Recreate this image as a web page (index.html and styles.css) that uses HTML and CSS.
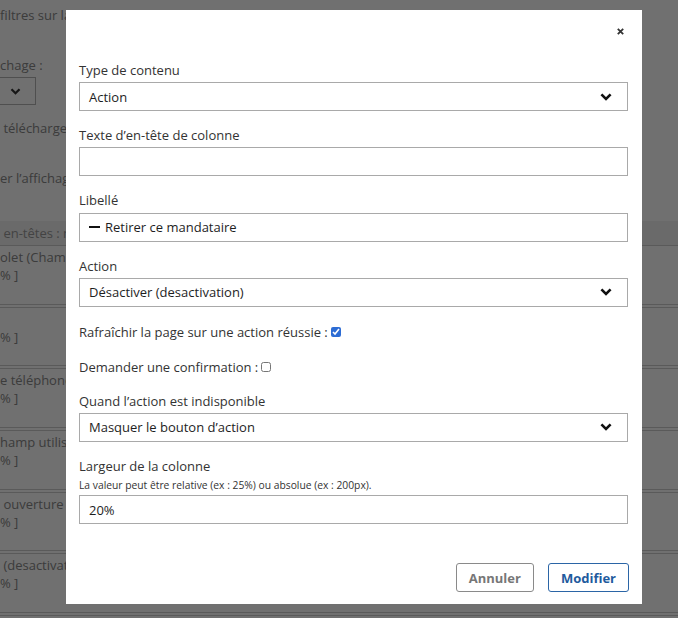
FILE: index.html
```html
<!DOCTYPE html>
<html lang="fr">
<head>
<meta charset="utf-8">
<title>Modifier la colonne</title>
<link rel="stylesheet" href="styles.css">
</head>
<body>
<div class="page">
  <p class="bg-text t1">filtres sur la</p>
  <p class="bg-text t2">chage :</p>
  <div class="bg-select">
    <svg width="11" height="7" viewBox="0 0 12 8"><path d="M1.4 1.4 6 6 10.6 1.4" fill="none" stroke="#333" stroke-width="2.6"/></svg>
  </div>
  <p class="bg-text t3">&nbsp;téléchargem</p>
  <p class="bg-text t4">er l’affichage</p>
  <div class="bg-table">
    <div class="bg-head">&nbsp;en-têtes : n</div>
    <div class="bg-row"><p>olet (Champ</p><p>% ]</p></div>
    <div class="bg-row"><p></p><p>% ]</p></div>
    <div class="bg-row"><p>e téléphone</p><p>% ]</p></div>
    <div class="bg-row"><p>hamp utilisa</p><p>% ]</p></div>
    <div class="bg-row"><p>&nbsp;ouverture d</p><p>% ]</p></div>
    <div class="bg-row"><p>&nbsp;(desactivatio</p><p>% ]</p></div>
  </div>
</div>
<div class="overlay"></div>
<div class="modal" role="dialog">
  <div class="modal-head">
    <button class="close" aria-label="Fermer">
      <svg width="7" height="7" viewBox="0 0 7 7"><path d="M0.8 0.8 6.2 6.2M6.2 0.8 0.8 6.2" stroke="#333" stroke-width="1.8" fill="none"/></svg>
    </button>
  </div>
  <div class="field">
    <label class="lbl">Type de contenu</label>
    <div class="control"><span class="val">Action</span>
      <svg class="chev" width="12" height="8" viewBox="0 0 12 8"><path d="M1.4 1.4 6 6 10.6 1.4" fill="none" stroke="#111" stroke-width="2.6"/></svg>
    </div>
  </div>
  <div class="field">
    <label class="lbl">Texte d’en-tête de colonne</label>
    <div class="control"></div>
  </div>
  <div class="field">
    <label class="lbl">Libellé</label>
    <div class="control"><span class="minus"></span><span class="val">Retirer ce mandataire</span></div>
  </div>
  <div class="field">
    <label class="lbl">Action</label>
    <div class="control"><span class="val">Désactiver (desactivation)</span>
      <svg class="chev" width="12" height="8" viewBox="0 0 12 8"><path d="M1.4 1.4 6 6 10.6 1.4" fill="none" stroke="#111" stroke-width="2.6"/></svg>
    </div>
  </div>
  <div class="check">Rafraîchir la page sur une action réussie :<input type="checkbox" checked></div>
  <div class="check">Demander une confirmation :<input type="checkbox"></div>
  <div class="field">
    <label class="lbl">Quand l’action est indisponible</label>
    <div class="control"><span class="val">Masquer le bouton d’action</span>
      <svg class="chev" width="12" height="8" viewBox="0 0 12 8"><path d="M1.4 1.4 6 6 10.6 1.4" fill="none" stroke="#111" stroke-width="2.6"/></svg>
    </div>
  </div>
  <div class="field last">
    <label class="lbl">Largeur de la colonne</label>
    <div class="hint">La valeur peut être relative (ex : 25%) ou absolue (ex : 200px).</div>
    <div class="control"><span class="val">20%</span></div>
  </div>
  <div class="footer">
    <button class="btn btn-cancel">Annuler</button>
    <button class="btn btn-primary">Modifier</button>
  </div>
</div>
</body>
</html>
```
FILE: styles.css
```css
* { box-sizing: border-box; }
html, body { margin: 0; padding: 0; }
body {
  font-family: "Open Sans", sans-serif;
  font-size: 13px;
  color: #333;
  background: #fff;
  width: 678px;
  height: 618px;
  overflow: hidden;
  position: relative;
}
.page { padding-top: 1px; }
.bg-text {
  margin: 0;
  line-height: 18px;
  color: #888;
  white-space: nowrap;
}
.t1 { margin-top: 5px; }
.t2 { margin-top: 32px; }
.bg-select {
  margin-top: 3px;
  margin-left: -20px;
  width: 56px;
  height: 28px;
  border: 1px solid #b5b5b5;
  display: flex;
  align-items: center;
  justify-content: flex-end;
  padding-right: 14px;
}
.t3 { margin-top: 14px; }
.t4 { margin-top: 32px; }
.bg-table { margin-top: 34px; }
.bg-head {
  height: 25px;
  line-height: 24px;
  background: #f1f1f1;
  border-bottom: 1px solid #ccc;
  color: #999;
  white-space: nowrap;
}
.bg-row {
  padding: 2px 0 19.7px;
  border-bottom: 4px double #ccc;
}
.bg-row p {
  margin: 0;
  height: 18px;
  line-height: 18px;
  color: #888;
  white-space: nowrap;
}
.overlay {
  position: fixed;
  inset: 0;
  background: rgba(0, 0, 0, 0.56);
}
.modal {
  position: absolute;
  left: 66px;
  top: 10px;
  width: 576px;
  background: #fff;
  padding: 0 14px 12px 13px;
}
.modal-head {
  height: 51px;
  display: flex;
  justify-content: flex-end;
  align-items: flex-start;
  padding-top: 16px;
}
.close {
  width: 10px;
  height: 10px;
  padding: 0;
  margin-right: 3px;
  border: none;
  background: none;
  display: flex;
  align-items: center;
  justify-content: center;
}
.field { margin-bottom: 15px; }
.field.last { margin-bottom: 0; }
.lbl {
  display: block;
  line-height: 1.4;
  margin-bottom: 3px;
  color: #333;
}
.hint {
  font-size: 10.3px;
  line-height: 14px;
  margin: 0 0 3px;
  color: #333;
}
.control {
  height: 29px;
  border: 1px solid #a9a9a9;
  display: flex;
  align-items: center;
  padding: 0 15px 0 9px;
  color: #1e1e1e;
}
.val { flex: 1; white-space: nowrap; }
.minus {
  width: 11px;
  height: 2.5px;
  background: #111;
  margin-right: 5px;
}
.check {
  display: flex;
  align-items: center;
  height: 20px;
  margin-bottom: 15px;
  color: #333;
}
.check input {
  width: 10px;
  height: 10px;
  margin: 0 0 0 3px;
  accent-color: #2d6cd4;
}
.footer {
  display: flex;
  justify-content: flex-end;
  gap: 14px;
  padding-top: 39px;
  margin-right: -1px;
}
.btn {
  height: 29px;
  padding: 0 12px;
  border-radius: 3px;
  background: #fff;
  font-family: "Open Sans", sans-serif;
  font-weight: 700;
  font-size: 13px;
}
.btn-cancel { border: 1px solid #8a8a8a; color: #777; }
.btn-primary { border: 1px solid #2b65a6; color: #1f5b9e; }
```
